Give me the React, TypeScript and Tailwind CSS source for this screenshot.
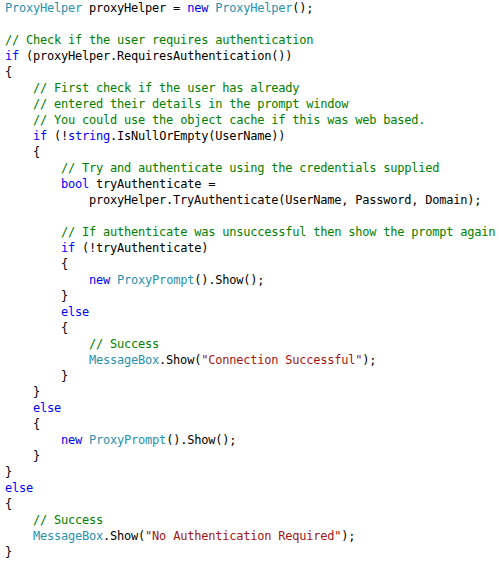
type Tok = [string, string?];

const K = "text-[#0000ff]";
const T = "text-[#2b91af]";
const C = "text-[#008000]";
const S = "text-[#a31515]";

const lines: Tok[][] = [
  [["ProxyHelper", T], [" proxyHelper = "], ["new", K], [" "], ["ProxyHelper", T], ["();"]],
  [],
  [["// Check if the user requires authentication", C]],
  [["if", K], [" (proxyHelper.RequiresAuthentication())"]],
  [["{"]],
  [["    "], ["// First check if the user has already", C]],
  [["    "], ["// entered their details in the prompt window", C]],
  [["    "], ["// You could use the object cache if this was web based.", C]],
  [["    "], ["if", K], [" (!"], ["string", K], [".IsNullOrEmpty(UserName))"]],
  [["    {"]],
  [["        "], ["// Try and authenticate using the credentials supplied", C]],
  [["        "], ["bool", K], [" tryAuthenticate ="]],
  [["            proxyHelper.TryAuthenticate(UserName, Password, Domain);"]],
  [],
  [["        "], ["// If authenticate was unsuccessful then show the prompt again", C]],
  [["        "], ["if", K], [" (!tryAuthenticate)"]],
  [["        {"]],
  [["            "], ["new", K], [" "], ["ProxyPrompt", T], ["().Show();"]],
  [["        }"]],
  [["        "], ["else", K]],
  [["        {"]],
  [["            "], ["// Success", C]],
  [["            "], ["MessageBox", T], [".Show("], ['"Connection Successful"', S], [");"]],
  [["        }"]],
  [["    }"]],
  [["    "], ["else", K]],
  [["    {"]],
  [["        "], ["new", K], [" "], ["ProxyPrompt", T], ["().Show();"]],
  [["    }"]],
  [["}"]],
  [["else", K]],
  [["{"]],
  [["    "], ["// Success", C]],
  [["    "], ["MessageBox", T], [".Show("], ['"No Authentication Required"', S], [");"]],
  [["}"]],
];

export default function App() {
  return (
    <div className="w-[499px] h-[565px] overflow-hidden bg-white pl-[5px] pt-0 font-['DejaVu_Sans_Mono',monospace] text-[12px] tracking-[-0.22px] text-black">
      {lines.map((line, i) => (
        <div key={i} className="h-4 leading-4 whitespace-pre">
          {line.length === 0
            ? " "
            : line.map(([text, cls], j) => (
                <span key={j} className={cls}>
                  {text}
                </span>
              ))}
        </div>
      ))}
    </div>
  );
}
